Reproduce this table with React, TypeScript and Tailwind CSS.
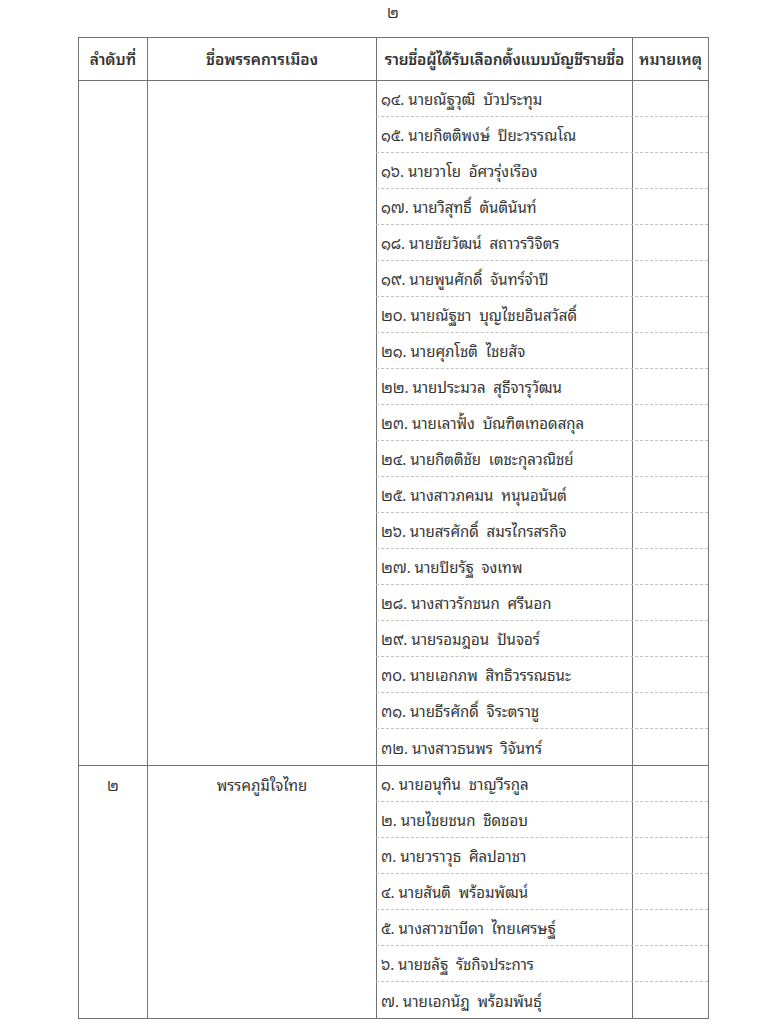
const thaiDigits = "๐๑๒๓๔๕๖๗๘๙";
const toThai = (n: number) =>
  String(n)
    .split("")
    .map((d) => thaiDigits[Number(d)])
    .join("");

type Party = {
  no: string;
  name: string;
  start: number;
  members: [string, string][];
};

// Continuation page: party 1 starts at number 14, party 2 from 1
const parties: Party[] = [
  {
    no: "",
    name: "",
    start: 14,
    members: [
      ["นายณัฐวุฒิ", "บัวประทุม"],
      ["นายกิตติพงษ์", "ปิยะวรรณโณ"],
      ["นายวาโย", "อัศวรุ่งเรือง"],
      ["นายวิสุทธิ์", "ตันตินันท์"],
      ["นายชัยวัฒน์", "สถาวรวิจิตร"],
      ["นายพูนศักดิ์", "จันทร์จำปี"],
      ["นายณัฐชา", "บุญไชยอินสวัสดิ์"],
      ["นายศุภโชติ", "ไชยสัจ"],
      ["นายประมวล", "สุธีจารุวัฒน"],
      ["นายเลาฟั้ง", "บัณฑิตเทอดสกุล"],
      ["นายกิตติชัย", "เตชะกุลวณิชย์"],
      ["นางสาวภคมน", "หนุนอนันต์"],
      ["นายสรศักดิ์", "สมรไกรสรกิจ"],
      ["นายปิยรัฐ", "จงเทพ"],
      ["นางสาวรักชนก", "ศรีนอก"],
      ["นายรอมฎอน", "ปันจอร์"],
      ["นายเอกภพ", "สิทธิวรรณธนะ"],
      ["นายธีรศักดิ์", "จิระตราชู"],
      ["นางสาวธนพร", "วิจันทร์"],
    ],
  },
  {
    no: "๒",
    name: "พรรคภูมิใจไทย",
    start: 1,
    members: [
      ["นายอนุทิน", "ชาญวีรกูล"],
      ["นายไชยชนก", "ชิดชอบ"],
      ["นายวราวุธ", "ศิลปอาชา"],
      ["นายสันติ", "พร้อมพัฒน์"],
      ["นางสาวชาบีดา", "ไทยเศรษฐ์"],
      ["นายชลัฐ", "รัชกิจประการ"],
      ["นายเอกนัฏ", "พร้อมพันธุ์"],
    ],
  },
];

export default function App() {
  return (
    <div
      className="w-[780px] h-[1024px] bg-white text-[#333333] overflow-hidden"
      style={{
        fontFamily:
          '"Noto Sans Thai Looped", "Noto Sans Thai", "Loma", "Garuda", "Tlwg Typo", "Noto Sans", "DejaVu Sans", sans-serif',
      }}
    >
      {/* Page number */}
      <div className="h-[37px] pt-[1px] text-center text-[15px] leading-[20px] pl-[6px]">๒</div>

      {/* Table */}
      <div className="ml-[78px] w-[631px] border-[1.5px] border-[#727272]">
        {/* Header */}
        <div className="flex h-[43px] border-b-[1.5px] border-[#727272] text-[15.5px] font-semibold whitespace-nowrap">
          <div className="w-[68px] flex items-center justify-center">ลำดับที่</div>
          <div className="w-[229px] flex items-center justify-center border-l-[1.5px] border-[#727272]">
            ชื่อพรรคการเมือง
          </div>
          <div className="w-[256px] flex items-center justify-center border-l-[1.5px] border-[#727272] tracking-[-0.2px]">
            รายชื่อผู้ได้รับเลือกตั้งแบบบัญชีรายชื่อ
          </div>
          <div className="flex-1 flex items-center justify-center border-l-[1.5px] border-[#727272]">
            หมายเหตุ
          </div>
        </div>

        {parties.map((party, pi) => (
          <div
            key={pi}
            className={
              pi > 0 ? "flex border-t-[1.5px] border-[#727272]" : "flex"
            }
          >
            <div className="w-[68px] pt-[6px] text-center text-[15px] leading-[24px]">{party.no}</div>
            <div className="w-[229px] pt-[6px] text-center text-[15px] leading-[24px] border-l-[1.5px] border-[#727272]">
              {party.name}
            </div>
            <div className="flex-1 flex flex-col">
              {party.members.map(([first, last], i) => (
                <div
                  key={i}
                  className={
                    i < party.members.length - 1
                      ? "flex h-[36px] border-b border-dashed border-[#c2c2c2]"
                      : "flex h-[36px]"
                  }
                >
                  <div className="w-[256px] flex items-center pl-[4px] text-[15px] whitespace-pre border-l-[1.5px] border-[#727272]">
                    {`${toThai(party.start + i)}. ${first}  ${last}`}
                  </div>
                  <div className="flex-1 border-l-[1.5px] border-[#727272]" />
                </div>
              ))}
            </div>
          </div>
        ))}
      </div>
    </div>
  );
}
